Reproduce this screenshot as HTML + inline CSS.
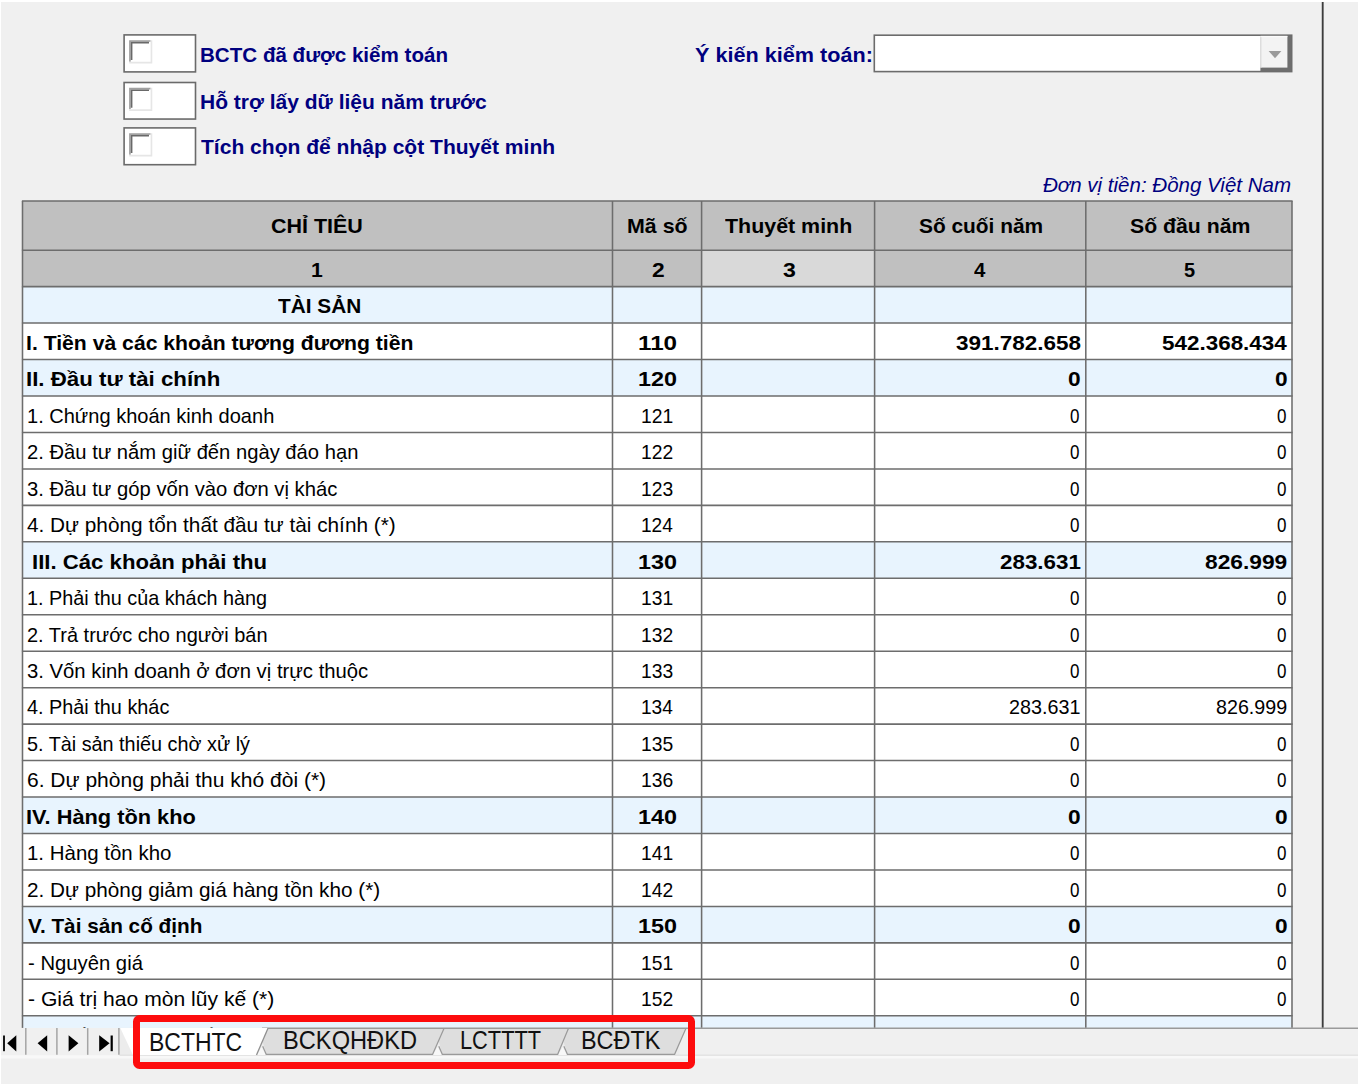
<!DOCTYPE html>
<html lang="vi"><head><meta charset="utf-8"><title>BCTC</title>
<style>
html,body{margin:0;padding:0;background:#f0f0f0}
body{width:1358px;height:1084px;overflow:hidden;background:#f0f0f0;position:relative;font-family:"Liberation Sans", sans-serif;}
#pg{position:absolute;left:0;top:0;width:1358px;height:1084px;overflow:hidden}
.t{position:absolute;white-space:nowrap;line-height:1;transform-origin:0 0;color:#000}
#red{position:absolute;left:133px;top:1015px;width:562.4px;height:54.3px;box-sizing:border-box;border:7px solid #fd0c0d;border-radius:6.5px}
</style></head>
<body>
<div id="pg">
<svg width="1358" height="1084" viewBox="0 0 1358 1084" style="position:absolute;left:0;top:0">
<rect x="0" y="0" width="1358" height="2" fill="#fff"/><rect x="0" y="0" width="1" height="1084" fill="#fff"/>
<rect x="22.5" y="201.0" width="1269.5" height="85.60000000000002" fill="#c0c0c0"/>
<rect x="701.6" y="250.2" width="173.0" height="36.400000000000034" fill="#d9d9d9"/>
<rect x="22.5" y="286.6" width="1269.5" height="741.6999999999999" fill="#fff"/>
<rect x="22.5" y="286.60" width="1269.5" height="36.46" fill="#e8f4fe"/>
<rect x="22.5" y="906.42" width="1269.5" height="36.46" fill="#e8f4fe"/>
<rect x="22.5" y="359.52" width="1269.5" height="36.46" fill="#e8f4fe"/>
<rect x="22.5" y="1015.80" width="1269.5" height="12.50" fill="#e8f4fe"/>
<rect x="22.5" y="541.82" width="1269.5" height="36.46" fill="#e8f4fe"/>
<rect x="22.5" y="797.04" width="1269.5" height="36.46" fill="#e8f4fe"/>
<g stroke="#6d6d6d" stroke-width="1.55" fill="none">
<path d="M21.9 201.0H1292.6"/>
<path d="M21.9 250.2H1292.6"/>
<path d="M21.9 286.60H1292.6"/>
<path d="M21.9 323.06H1292.6"/>
<path d="M21.9 359.52H1292.6"/>
<path d="M21.9 395.98H1292.6"/>
<path d="M21.9 432.44H1292.6"/>
<path d="M21.9 468.90H1292.6"/>
<path d="M21.9 505.36H1292.6"/>
<path d="M21.9 541.82H1292.6"/>
<path d="M21.9 578.28H1292.6"/>
<path d="M21.9 614.74H1292.6"/>
<path d="M21.9 651.20H1292.6"/>
<path d="M21.9 687.66H1292.6"/>
<path d="M21.9 724.12H1292.6"/>
<path d="M21.9 760.58H1292.6"/>
<path d="M21.9 797.04H1292.6"/>
<path d="M21.9 833.50H1292.6"/>
<path d="M21.9 869.96H1292.6"/>
<path d="M21.9 906.42H1292.6"/>
<path d="M21.9 942.88H1292.6"/>
<path d="M21.9 979.34H1292.6"/>
<path d="M21.9 1015.80H1292.6"/>
<path d="M22.5 201.0V1028.3"/>
<path d="M612.5 201.0V1028.3"/>
<path d="M701.6 201.0V1028.3"/>
<path d="M874.6 201.0V1028.3"/>
<path d="M1085.8 201.0V1028.3"/>
<path d="M1292.0 201.0V1028.3"/>
</g>
<path d="M1322.7 2V1028.3" stroke="#3c3c3c" stroke-width="1.85"/>
<rect x="124.1" y="34.9" width="71.4" height="37.00" fill="#fff" stroke="#6a6a6a" stroke-width="1.6"/>
<path d="M129.1 40.199999999999996h21.54v1.66h-19.88v19.88h-1.66z" fill="#a0a0a0"/>
<path d="M130.76 41.85999999999999h18.22v1.66h-16.56v16.56h-1.66z" fill="#696969"/>
<path d="M150.64 40.199999999999996h1.66v23.2h-23.2v-1.66h21.54z" fill="#e6e6e6"/>
<rect x="124.1" y="82.5" width="71.4" height="36.55" fill="#fff" stroke="#6a6a6a" stroke-width="1.6"/>
<path d="M129.1 87.8h21.54v1.66h-19.88v19.88h-1.66z" fill="#a0a0a0"/>
<path d="M130.76 89.46h18.22v1.66h-16.56v16.56h-1.66z" fill="#696969"/>
<path d="M150.64 87.8h1.66v23.2h-23.2v-1.66h21.54z" fill="#e6e6e6"/>
<rect x="124.1" y="127.9" width="71.4" height="36.80" fill="#fff" stroke="#6a6a6a" stroke-width="1.6"/>
<path d="M129.1 133.20000000000002h21.54v1.66h-19.88v19.88h-1.66z" fill="#a0a0a0"/>
<path d="M130.76 134.86h18.22v1.66h-16.56v16.56h-1.66z" fill="#696969"/>
<path d="M150.64 133.20000000000002h1.66v23.2h-23.2v-1.66h21.54z" fill="#e6e6e6"/>
<rect x="874.3" y="35.2" width="417.4000000000001" height="36.39999999999999" fill="#fff" stroke="#6c6c6c" stroke-width="1.6"/>
<rect x="1260.4" y="35.900000000000006" width="30.59999999999991" height="35.499999999999986" fill="#6e6e6e"/>
<rect x="1260.4" y="35.900000000000006" width="26.999999999999908" height="31.699999999999985" fill="#f3f3f3"/>
<path d="M1261.0 35.900000000000006V67.6" stroke="#e2e2e2" stroke-width="1.3"/>
<path d="M1260.4 36.50000000000001H1287.4" stroke="#fbfbfb" stroke-width="1.2"/>
<path d="M1268.6 50.9H1281.4L1275 58.3Z" fill="#9a9a9a"/>
</svg>
<div class="t" style="left:199.91px;top:43.82px;font-size:21px;transform:scaleX(0.9801);font-weight:bold;color:#00007f;">BCTC đã được kiểm toán</div>
<div class="t" style="left:199.89px;top:90.62px;font-size:21px;transform:scaleX(0.9999);font-weight:bold;color:#00007f;">Hỗ trợ lấy dữ liệu năm trước</div>
<div class="t" style="left:201.20px;top:136.22px;font-size:21px;transform:scaleX(1.0017);font-weight:bold;color:#00007f;">Tích chọn để nhập cột Thuyết minh</div>
<div class="t" style="left:694.66px;top:43.82px;font-size:21px;transform:scaleX(1.0296);font-weight:bold;color:#00007f;">Ý kiến kiểm toán:</div>
<div class="t" style="left:1043.18px;top:173.52px;font-size:21px;transform:scaleX(0.9769);font-style:italic;color:#00007f;">Đơn vị tiền: Đồng Việt Nam</div>
<div class="t" style="left:270.63px;top:215.02px;font-size:21px;transform:scaleX(1.0224);font-weight:bold;">CHỈ TIÊU</div>
<div class="t" style="left:627.26px;top:215.02px;font-size:21px;transform:scaleX(1.0183);font-weight:bold;">Mã số</div>
<div class="t" style="left:725.10px;top:215.02px;font-size:21px;transform:scaleX(1.0193);font-weight:bold;">Thuyết minh</div>
<div class="t" style="left:918.77px;top:215.02px;font-size:21px;transform:scaleX(0.9940);font-weight:bold;">Số cuối năm</div>
<div class="t" style="left:1129.97px;top:215.02px;font-size:21px;transform:scaleX(1.0110);font-weight:bold;">Số đầu năm</div>
<div class="t" style="left:311.08px;top:258.72px;font-size:21px;transform:scaleX(1.0057);font-weight:bold;">1</div>
<div class="t" style="left:652.19px;top:258.72px;font-size:21px;transform:scaleX(1.0857);font-weight:bold;">2</div>
<div class="t" style="left:783.04px;top:258.72px;font-size:21px;transform:scaleX(1.0990);font-weight:bold;">3</div>
<div class="t" style="left:974.30px;top:258.72px;font-size:21px;transform:scaleX(0.9735);font-weight:bold;">4</div>
<div class="t" style="left:1184.19px;top:258.72px;font-size:21px;transform:scaleX(0.9512);font-weight:bold;">5</div>
<div class="t" style="left:278.30px;top:295.42px;font-size:21px;transform:scaleX(0.9913);font-weight:bold;">TÀI SẢN</div>
<div class="t" style="left:26.38px;top:331.88px;font-size:21px;transform:scaleX(1.0083);font-weight:bold;">I. Tiền và các khoản tương đương tiền</div>
<div class="t" style="left:637.79px;top:331.88px;font-size:21px;transform:scaleX(1.1540);font-weight:bold;">110</div>
<div class="t" style="left:955.85px;top:331.88px;font-size:21px;transform:scaleX(1.0705);font-weight:bold;">391.782.658</div>
<div class="t" style="left:1161.75px;top:331.88px;font-size:21px;transform:scaleX(1.0687);font-weight:bold;">542.368.434</div>
<div class="t" style="left:26.31px;top:368.34px;font-size:21px;transform:scaleX(1.0603);font-weight:bold;">II. Đầu tư tài chính</div>
<div class="t" style="left:637.84px;top:368.34px;font-size:21px;transform:scaleX(1.1133);font-weight:bold;">120</div>
<div class="t" style="left:1068.19px;top:368.34px;font-size:21px;transform:scaleX(1.0814);font-weight:bold;">0</div>
<div class="t" style="left:1274.59px;top:368.34px;font-size:21px;transform:scaleX(1.0814);font-weight:bold;">0</div>
<div class="t" style="left:27.45px;top:404.80px;font-size:21px;transform:scaleX(0.9538);">1. Chứng khoán kinh doanh</div>
<div class="t" style="left:641.29px;top:404.80px;font-size:21px;transform:scaleX(0.9187);">121</div>
<div class="t" style="left:1070.17px;top:404.80px;font-size:21px;transform:scaleX(0.8095);">0</div>
<div class="t" style="left:1276.67px;top:404.80px;font-size:21px;transform:scaleX(0.8095);">0</div>
<div class="t" style="left:26.75px;top:441.26px;font-size:21px;transform:scaleX(0.9619);">2. Đầu tư nắm giữ đến ngày đáo hạn</div>
<div class="t" style="left:641.29px;top:441.26px;font-size:21px;transform:scaleX(0.9187);">122</div>
<div class="t" style="left:1070.17px;top:441.26px;font-size:21px;transform:scaleX(0.8095);">0</div>
<div class="t" style="left:1276.67px;top:441.26px;font-size:21px;transform:scaleX(0.8095);">0</div>
<div class="t" style="left:27.07px;top:477.72px;font-size:21px;transform:scaleX(0.9635);">3. Đầu tư góp vốn vào đơn vị khác</div>
<div class="t" style="left:641.29px;top:477.72px;font-size:21px;transform:scaleX(0.9187);">123</div>
<div class="t" style="left:1070.17px;top:477.72px;font-size:21px;transform:scaleX(0.8095);">0</div>
<div class="t" style="left:1276.67px;top:477.72px;font-size:21px;transform:scaleX(0.8095);">0</div>
<div class="t" style="left:27.38px;top:514.18px;font-size:21px;transform:scaleX(0.9898);">4. Dự phòng tổn thất đầu tư tài chính (*)</div>
<div class="t" style="left:641.31px;top:514.18px;font-size:21px;transform:scaleX(0.9096);">124</div>
<div class="t" style="left:1070.17px;top:514.18px;font-size:21px;transform:scaleX(0.8095);">0</div>
<div class="t" style="left:1276.67px;top:514.18px;font-size:21px;transform:scaleX(0.8095);">0</div>
<div class="t" style="left:31.62px;top:550.64px;font-size:21px;transform:scaleX(1.0549);font-weight:bold;">III. Các khoản phải thu</div>
<div class="t" style="left:637.84px;top:550.64px;font-size:21px;transform:scaleX(1.1133);font-weight:bold;">130</div>
<div class="t" style="left:1000.00px;top:550.64px;font-size:21px;transform:scaleX(1.0652);font-weight:bold;">283.631</div>
<div class="t" style="left:1204.99px;top:550.64px;font-size:21px;transform:scaleX(1.0839);font-weight:bold;">826.999</div>
<div class="t" style="left:27.46px;top:587.10px;font-size:21px;transform:scaleX(0.9435);">1. Phải thu của khách hàng</div>
<div class="t" style="left:641.29px;top:587.10px;font-size:21px;transform:scaleX(0.9187);">131</div>
<div class="t" style="left:1070.17px;top:587.10px;font-size:21px;transform:scaleX(0.8095);">0</div>
<div class="t" style="left:1276.67px;top:587.10px;font-size:21px;transform:scaleX(0.8095);">0</div>
<div class="t" style="left:26.76px;top:623.56px;font-size:21px;transform:scaleX(0.9508);">2. Trả trước cho người bán</div>
<div class="t" style="left:641.29px;top:623.56px;font-size:21px;transform:scaleX(0.9187);">132</div>
<div class="t" style="left:1070.17px;top:623.56px;font-size:21px;transform:scaleX(0.8095);">0</div>
<div class="t" style="left:1276.67px;top:623.56px;font-size:21px;transform:scaleX(0.8095);">0</div>
<div class="t" style="left:27.07px;top:660.02px;font-size:21px;transform:scaleX(0.9659);">3. Vốn kinh doanh ở đơn vị trực thuộc</div>
<div class="t" style="left:641.29px;top:660.02px;font-size:21px;transform:scaleX(0.9187);">133</div>
<div class="t" style="left:1070.17px;top:660.02px;font-size:21px;transform:scaleX(0.8095);">0</div>
<div class="t" style="left:1276.67px;top:660.02px;font-size:21px;transform:scaleX(0.8095);">0</div>
<div class="t" style="left:27.39px;top:696.48px;font-size:21px;transform:scaleX(0.9450);">4. Phải thu khác</div>
<div class="t" style="left:641.31px;top:696.48px;font-size:21px;transform:scaleX(0.9096);">134</div>
<div class="t" style="left:1008.97px;top:696.48px;font-size:21px;transform:scaleX(0.9409);">283.631</div>
<div class="t" style="left:1215.79px;top:696.48px;font-size:21px;transform:scaleX(0.9368);">826.999</div>
<div class="t" style="left:27.08px;top:732.94px;font-size:21px;transform:scaleX(0.9432);">5. Tài sản thiếu chờ xử lý</div>
<div class="t" style="left:641.29px;top:732.94px;font-size:21px;transform:scaleX(0.9187);">135</div>
<div class="t" style="left:1070.17px;top:732.94px;font-size:21px;transform:scaleX(0.8095);">0</div>
<div class="t" style="left:1276.67px;top:732.94px;font-size:21px;transform:scaleX(0.8095);">0</div>
<div class="t" style="left:26.72px;top:769.40px;font-size:21px;transform:scaleX(1.0005);">6. Dự phòng phải thu khó đòi (*)</div>
<div class="t" style="left:641.29px;top:769.40px;font-size:21px;transform:scaleX(0.9187);">136</div>
<div class="t" style="left:1070.17px;top:769.40px;font-size:21px;transform:scaleX(0.8095);">0</div>
<div class="t" style="left:1276.67px;top:769.40px;font-size:21px;transform:scaleX(0.8095);">0</div>
<div class="t" style="left:26.34px;top:805.86px;font-size:21px;transform:scaleX(1.0369);font-weight:bold;">IV. Hàng tồn kho</div>
<div class="t" style="left:637.84px;top:805.86px;font-size:21px;transform:scaleX(1.1133);font-weight:bold;">140</div>
<div class="t" style="left:1068.19px;top:805.86px;font-size:21px;transform:scaleX(1.0814);font-weight:bold;">0</div>
<div class="t" style="left:1274.59px;top:805.86px;font-size:21px;transform:scaleX(1.0814);font-weight:bold;">0</div>
<div class="t" style="left:27.42px;top:842.32px;font-size:21px;transform:scaleX(0.9739);">1. Hàng tồn kho</div>
<div class="t" style="left:641.29px;top:842.32px;font-size:21px;transform:scaleX(0.9187);">141</div>
<div class="t" style="left:1070.17px;top:842.32px;font-size:21px;transform:scaleX(0.8095);">0</div>
<div class="t" style="left:1276.67px;top:842.32px;font-size:21px;transform:scaleX(0.8095);">0</div>
<div class="t" style="left:26.73px;top:878.78px;font-size:21px;transform:scaleX(0.9884);">2. Dự phòng giảm giá hàng tồn kho (*)</div>
<div class="t" style="left:641.29px;top:878.78px;font-size:21px;transform:scaleX(0.9187);">142</div>
<div class="t" style="left:1070.17px;top:878.78px;font-size:21px;transform:scaleX(0.8095);">0</div>
<div class="t" style="left:1276.67px;top:878.78px;font-size:21px;transform:scaleX(0.8095);">0</div>
<div class="t" style="left:27.70px;top:915.24px;font-size:21px;transform:scaleX(0.9870);font-weight:bold;">V. Tài sản cố định</div>
<div class="t" style="left:637.84px;top:915.24px;font-size:21px;transform:scaleX(1.1133);font-weight:bold;">150</div>
<div class="t" style="left:1068.19px;top:915.24px;font-size:21px;transform:scaleX(1.0814);font-weight:bold;">0</div>
<div class="t" style="left:1274.59px;top:915.24px;font-size:21px;transform:scaleX(1.0814);font-weight:bold;">0</div>
<div class="t" style="left:27.77px;top:951.70px;font-size:21px;transform:scaleX(0.9650);">- Nguyên giá</div>
<div class="t" style="left:641.29px;top:951.70px;font-size:21px;transform:scaleX(0.9187);">151</div>
<div class="t" style="left:1070.17px;top:951.70px;font-size:21px;transform:scaleX(0.8095);">0</div>
<div class="t" style="left:1276.67px;top:951.70px;font-size:21px;transform:scaleX(0.8095);">0</div>
<div class="t" style="left:27.74px;top:988.16px;font-size:21px;transform:scaleX(1.0052);">- Giá trị hao mòn lũy kế (*)</div>
<div class="t" style="left:641.29px;top:988.16px;font-size:21px;transform:scaleX(0.9187);">152</div>
<div class="t" style="left:1070.17px;top:988.16px;font-size:21px;transform:scaleX(0.8095);">0</div>
<div class="t" style="left:1276.67px;top:988.16px;font-size:21px;transform:scaleX(0.8095);">0</div>
<div style="position:absolute;left:0;top:0;width:1358px;height:1028.3px;overflow:hidden"><div class="t" style="left:27.70px;top:1024.62px;font-size:21px;transform:scaleX(0.9931);font-weight:bold;">VI. Bất động sản đầu tư</div></div>
<svg width="1358" height="1084" viewBox="0 0 1358 1084" style="position:absolute;left:0;top:0">
<rect x="1" y="1027.8999999999999" width="1358" height="56.100000000000044" fill="#f0f0f0"/>
<rect x="119.5" y="1027.8999999999999" width="560" height="27.100000000000044" fill="#ececec"/>
<rect x="1" y="1055.3" width="1358" height="3.2" fill="#f8f8f8"/>
<path d="M119.5 1055.2H1358" stroke="#dcdcdc" stroke-width="1"/>
<path d="M25.8 1028.1V1054.8" stroke="#a4a4a4" stroke-width="1.5"/>
<path d="M56.9 1028.1V1054.8" stroke="#a4a4a4" stroke-width="1.5"/>
<path d="M87.7 1028.1V1054.8" stroke="#a4a4a4" stroke-width="1.5"/>
<path d="M118.9 1028.1V1054.8" stroke="#a4a4a4" stroke-width="1.5"/>
<g fill="#000">
<rect x="3.1" y="1035.5" width="1.8" height="15.699999999999955"/><path d="M16.3 1035.2L7.2 1043.35L16.3 1051.5Z"/>
<path d="M47.2 1035.2L37.6 1043.35L47.2 1051.5Z"/>
<path d="M68.6 1035.2L78.4 1043.35L68.6 1051.5Z"/>
<path d="M99.2 1035.2L109.6 1043.35L99.2 1051.5Z"/><rect x="110.6" y="1035.5" width="2.2" height="15.699999999999955"/>
</g>
<path d="M557.7 1054.8999999999999L567.2 1054.8999999999999L562.7 1047.3Z" fill="#f8f8f8"/>
<path d="M559.5 1028.3L567.4000000000001 1054.3H674.6L686.0 1028.3Z" fill="#dedede"/>
<path d="M563.9000000000001 1046.3L567.4000000000001 1054.3H674.6L686.0 1028.3" fill="none" stroke="#9a9a9a" stroke-width="1.2"/>
<path d="M432.6 1054.8999999999999L442.1 1054.8999999999999L437.6 1047.3Z" fill="#f8f8f8"/>
<path d="M435.1 1028.3L442.3 1054.3H557.7L568.5 1028.3Z" fill="#dedede"/>
<path d="M438.8 1046.3L442.3 1054.3H557.7L568.5 1028.3" fill="none" stroke="#9a9a9a" stroke-width="1.2"/>
<path d="M256.5 1054.8999999999999L266.0 1054.8999999999999L261.5 1047.3Z" fill="#f8f8f8"/>
<path d="M259.0 1028.3L266.2 1054.3H432.6L444.1 1028.3Z" fill="#dedede"/>
<path d="M262.7 1046.3L266.2 1054.3H432.6L444.1 1028.3" fill="none" stroke="#9a9a9a" stroke-width="1.2"/>
<path d="M262 1028.3H1358" stroke="#9a9a9a" stroke-width="1.4"/>
<path d="M120.3 1027.8999999999999L133 1055.1H256.5L268 1027.8999999999999Z" fill="#fff"/>
<path d="M256.5 1054.8999999999999L268 1028.3" stroke="#909090" stroke-width="1.3" fill="none"/>
</svg>
<div class="t" style="left:149.20px;top:1030.06px;font-size:25.8px;transform:scaleX(0.8907);color:#111;">BCTHTC</div>
<div class="t" style="left:283.25px;top:1027.78px;font-size:25.3px;transform:scaleX(0.9350);color:#111;">BCKQHĐKD</div>
<div class="t" style="left:460.00px;top:1027.78px;font-size:25.3px;transform:scaleX(0.8610);color:#111;">LCTTTT</div>
<div class="t" style="left:581.07px;top:1027.78px;font-size:25.3px;transform:scaleX(0.9258);color:#111;">BCĐTK</div>
<div id="red"></div>
</div>
</body></html>
